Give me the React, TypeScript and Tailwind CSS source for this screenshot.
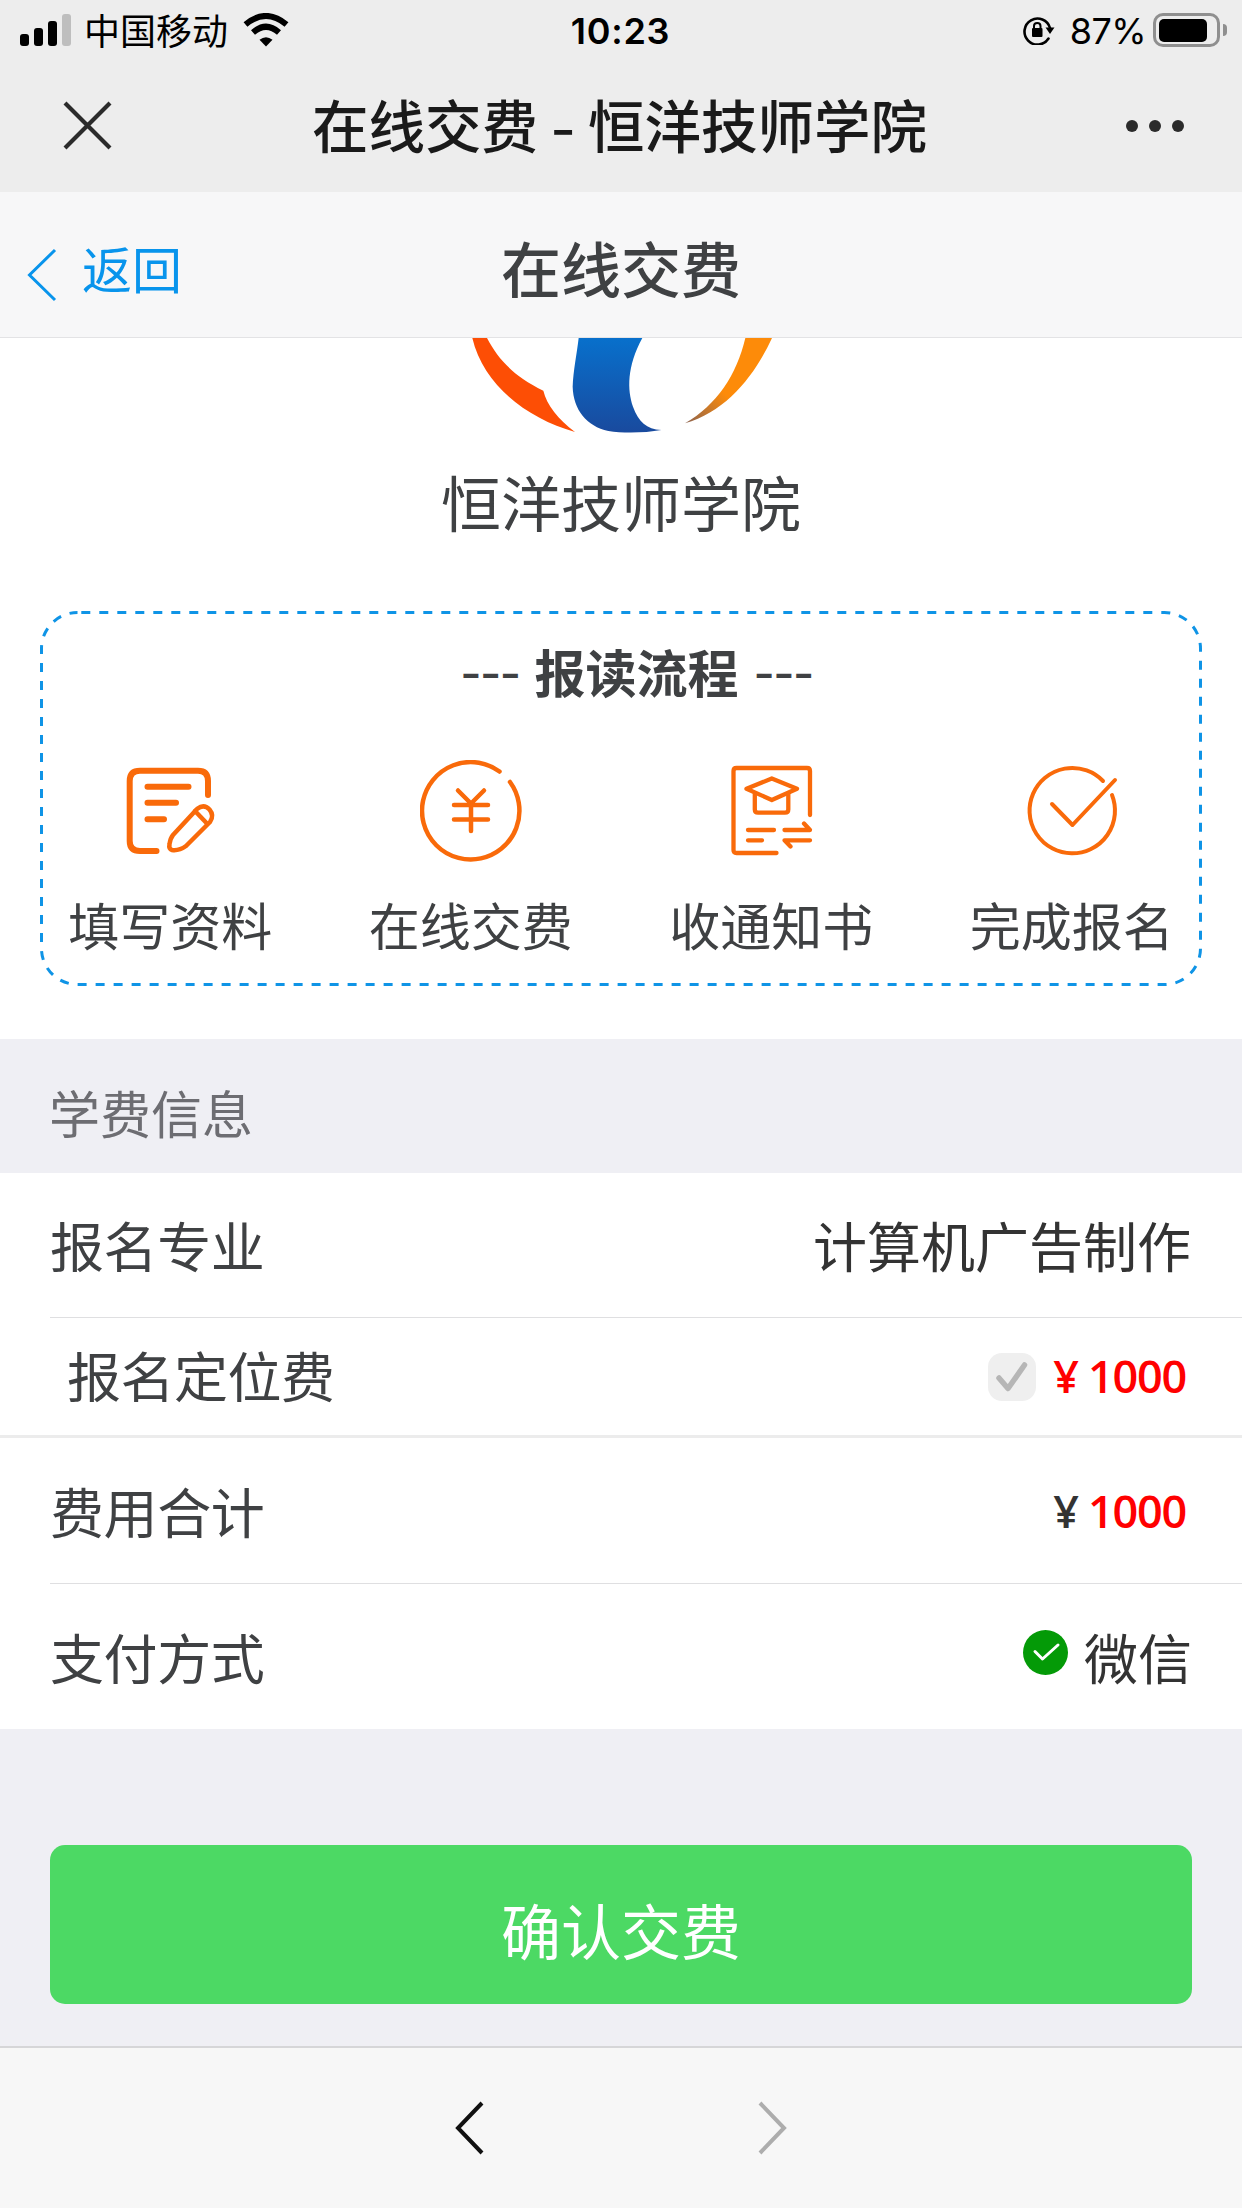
import type { ReactNode } from 'react'

interface Step {
  label: string
  icon: ReactNode
}

const FormIcon = () => (
  <svg width="102" height="102" viewBox="0 0 102 102" fill="none" stroke="#f96a0a" strokeLinecap="round" strokeLinejoin="round">
    <path d="M89 35V21Q89 10.700 79 10.700H21Q10.700 10.700 10.700 21V81Q10.700 91 21 91H37.500" strokeWidth="6" />
    <path d="M28.500 26.700H69.500M28.500 42.700H57M28.500 59.300H45" strokeWidth="6" />
    <path d="M78.300 48.700Q85 43.500 90.500 49.500Q95.500 55.500 91 62L67 86Q60 91 53 90Q49.500 89 50.500 84Q51.500 78 54 75Z" strokeWidth="4.500" />
    <path d="M76 51L87.500 63" strokeWidth="4.500" />
  </svg>
)

const YuanIcon = () => (
  <svg width="102" height="102" viewBox="0 0 102 102" fill="none" stroke="#f96a0a" strokeWidth="4.500" strokeLinecap="round" strokeLinejoin="round">
    <path d="M79.500 11.500A48.700 48.700 0 1 0 90 22" />
    <path d="M38 30.500L51 43.500L64 30.500M51 43.500V71M34 45H68M34 59.500H68" />
  </svg>
)

const NoticeIcon = () => (
  <svg width="102" height="102" viewBox="0 0 102 102" fill="none" stroke="#f96a0a" strokeWidth="4.300" strokeLinecap="round" strokeLinejoin="round">
    <path d="M90 55V11Q90 8 87 8H16.500Q13.500 8 13.500 11V90Q13.500 93 16.500 93H56.500" />
    <path d="M26.500 28.700L51.800 18.500L77 28.700L51.800 40Z" />
    <path d="M34.800 34V49.500Q34.800 52.700 38 52.700H65Q68.300 52.700 68.300 49.500V34" />
    <path d="M28 70H54M28 80.300H42M64.500 70H90L84 63.500M90 80.300H64.500L70.500 86.500" />
  </svg>
)

const DoneIcon = () => (
  <svg width="102" height="102" viewBox="0 0 102 102" fill="none" stroke="#f96a0a" strokeWidth="4" strokeLinecap="round" strokeLinejoin="round">
    <path d="M82 21A42.700 42.700 0 1 0 91 35" />
    <path d="M31 44L51.500 65L94 20" />
  </svg>
)

const steps: Step[] = [
  { label: '填写资料', icon: <FormIcon /> },
  { label: '在线交费', icon: <YuanIcon /> },
  { label: '收通知书', icon: <NoticeIcon /> },
  { label: '完成报名', icon: <DoneIcon /> },
]

function StatusBar() {
  return (
    <div className="grid h-15 grid-cols-3 items-center pr-[15px] pl-5 text-[36px] leading-none text-black">
      <div className="flex items-center">
        <div className="flex items-end gap-[5px]">
          <span className="h-3 w-[9px] rounded-[3px] bg-black" />
          <span className="h-[18px] w-[9px] rounded-[3px] bg-black" />
          <span className="h-[25px] w-[9px] rounded-[3px] bg-black" />
          <span className="h-8 w-[9px] rounded-[3px] bg-[#bebebe]" />
        </div>
        <span className="ml-[13px] pb-[2px]">中国移动</span>
        <svg className="ml-[15px]" width="46" height="34" viewBox="0 0 46 34">
          <path d="M23 33.500L16.500 26.800Q23 21.500 29.500 26.800Z" fill="#000" />
          <path d="M10 19.500Q23 8 36 19.500" fill="none" stroke="#000" strokeWidth="6" />
          <path d="M2.500 11.500Q23 -5.500 43.500 11.500" fill="none" stroke="#000" strokeWidth="6" />
        </svg>
      </div>
      <div className="pt-[2px] pr-[6px] text-center font-[Inter] font-semibold tracking-[0.7px]">10:23</div>
      <div className="flex items-center justify-end">
        <svg width="32" height="30" viewBox="0 0 32 30" fill="none" stroke="#000">
          <path d="M25.500 23.500A13 13 0 1 1 27 13" strokeWidth="2.600" strokeLinecap="round" />
          <path d="M22.500 12.500H31.500L27 19Z" fill="#000" stroke="none" />
          <rect x="9" y="13" width="10.500" height="9" rx="1" fill="#000" stroke="none" />
          <path d="M11 13V11Q11 8 14.200 8Q17.500 8 17.500 11V13" strokeWidth="2" />
        </svg>
        <span className="ml-[15px] pt-[2px] font-[Inter] tracking-[-0.6px]">87%</span>
        <div className="ml-[7px] flex h-[34px] w-[67px] items-center rounded-[10px] border-[3px] border-[#8f8f8f] pl-[3px]">
          <div className="h-[23px] w-[48px] rounded-[5px] bg-black" />
        </div>
        <div className="ml-[3px] h-3 w-[4px] rounded-r-full bg-[#8f8f8f]" />
      </div>
    </div>
  )
}

function BrowserBar() {
  return (
    <div className="flex h-33 items-center justify-between pr-[58px] pl-[62px] text-[#1a1a1a]">
      <svg className="mb-[2px]" width="51" height="51" viewBox="0 0 51 51" stroke="#2b2b2b" strokeWidth="4.200">
        <path d="M3 3L48 48M48 3L3 48" />
      </svg>
      <h1 className="flex pb-[6px] text-[56.500px] leading-none font-medium">
        在线交费
        <span className="mx-[15px] scale-x-120">-</span>
        恒洋技师学院
      </h1>
      <div className="flex gap-[11px]">
        <span className="size-3 rounded-full bg-[#2b2b2b]" />
        <span className="size-3 rounded-full bg-[#2b2b2b]" />
        <span className="size-3 rounded-full bg-[#2b2b2b]" />
      </div>
    </div>
  )
}

function PageHeader() {
  return (
    <header className="grid h-[146px] grid-cols-3 items-center border-b border-[#e3e3e5] bg-[#f7f7f8]">
      <a className="flex items-center pl-[27px] text-[50px] leading-none text-[#0894ec]">
        <svg className="mt-[21px]" width="30" height="54" viewBox="0 0 30 54" fill="none" stroke="#0894ec" strokeWidth="3">
          <path d="M28 2L2.500 27L28 52" />
        </svg>
        <span className="ml-[25px] pt-[5px]">返回</span>
      </a>
      <h2 className="pt-[4px] text-center text-[60px] leading-none font-medium">在线交费</h2>
    </header>
  )
}

function SchoolLogo() {
  return (
    <svg className="mx-auto block" width="442" height="98" viewBox="0 24 1326 294">
      <defs>
        <linearGradient id="blue" x1="0" y1="0" x2="0" y2="1">
          <stop offset="0" stopColor="#0870cc" />
          <stop offset="1" stopColor="#194a9e" />
        </linearGradient>
        <linearGradient id="orange" x1="1" y1="0" x2="0" y2="1">
          <stop offset="0.600" stopColor="#fd8b09" />
          <stop offset="1" stopColor="#8c6350" />
        </linearGradient>
      </defs>
      <path d="M217 24H261C295 88 340 138 430 182C440 225 475 268 525 306C380 265 250 165 217 24Z" fill="#fd4e05" />
      <path d="M536 24H727C680 110 682 180 699 230C715 275 740 297 784 300C735 309 670 310 625 303C560 288 520 240 518 170C520 120 530 75 536 24Z" fill="url(#blue)" />
      <path d="M1036 24H1116C1065 135 980 245 855 280C950 225 1010 135 1036 24Z" fill="url(#orange)" />
    </svg>
  )
}

function ProcessCard() {
  return (
    <div className="relative mx-10 h-[375px]">
      <svg className="absolute inset-0" width="1162" height="375" fill="none">
        <rect x="1.500" y="1.500" width="1159" height="372" rx="36" stroke="#0f94e6" strokeWidth="3" strokeDasharray="9 9" strokeDashoffset="-3.800" />
      </svg>
      <h3 className="flex items-center justify-center gap-[15px] pt-[30px] pl-[31px] text-[51px] leading-[56px] font-bold">
        <span className="pt-[4px] font-[Inter] text-[46px] font-medium tracking-[-1.500px]">---</span>
        报读流程
        <span className="pt-[4px] font-[Inter] text-[46px] font-medium tracking-[-1.500px]">---</span>
      </h3>
      <div className="-mx-5 mt-[59px] grid grid-cols-4">
        {steps.map((step) => (
          <div key={step.label} className="flex flex-col items-center">
            {step.icon}
            <span className="mt-[34px] text-[51px] leading-[56px]">{step.label}</span>
          </div>
        ))}
      </div>
    </div>
  )
}

function FeeList() {
  return (
    <div className="bg-white text-[54px] leading-none">
      <div className="ml-[50px] flex h-[145px] items-center justify-between border-b border-[#dfdfe1] pr-[51px]">
        <span className="tracking-[-0.400px]">报名专业</span>
        <span className="text-[#333]">计算机广告制作</span>
      </div>
      <div className="flex h-[120px] items-center justify-between border-b-[3px] border-[#ececec] pr-[56px] pl-[67px]">
        <span className="pb-[4px] tracking-[-0.500px]">报名定位费</span>
        <div className="flex items-center font-['Open_Sans'] text-[45px] font-semibold text-[#f00]">
          <svg className="mr-[17px]" width="48" height="48" viewBox="0 0 48 48">
            <rect width="48" height="48" rx="14" fill="#efefef" />
            <path d="M11 25L20 35.500L36.500 12" fill="none" stroke="#b6b6b6" strokeWidth="5.500" strokeLinecap="round" strokeLinejoin="round" />
          </svg>
          <span className="pb-[2px]">¥</span>
          <span className="ml-[9px] pb-[2px] tracking-[-1.200px]">1000</span>
        </div>
      </div>
      <div className="ml-[50px] flex h-[146px] items-center justify-between border-b border-[#dfdfe1] pr-[56px]">
        <span className="tracking-[-0.400px]">费用合计</span>
        <div className="flex font-['Open_Sans'] text-[45px] font-semibold text-[#333]">
          <span>¥</span>
          <span className="ml-[9px] tracking-[-1.200px] text-[#f00]">1000</span>
        </div>
      </div>
      <div className="ml-[50px] flex h-[145px] items-center justify-between pr-[50px]">
        <span className="pt-[1px] tracking-[-0.400px]">支付方式</span>
        <div className="flex items-center text-[#333]">
          <svg className="mr-[16px] mb-[8px]" width="45" height="45" viewBox="0 0 45 45">
            <circle cx="22.500" cy="22.500" r="22.500" fill="#049a07" />
            <path d="M12 21.500L19.500 29L35 15" fill="none" stroke="#fff" strokeWidth="3" strokeLinecap="round" strokeLinejoin="round" />
          </svg>
          <span className="pt-[1px]">微信</span>
        </div>
      </div>
    </div>
  )
}

export default function App() {
  return (
    <div className="flex h-[2208px] w-[1242px] flex-col overflow-hidden bg-[#efeff4] font-['Noto_Sans_CJK_SC',sans-serif] text-[#3f4143]">
      <div className="bg-[#ededed]">
        <StatusBar />
        <BrowserBar />
      </div>
      <PageHeader />
      <section className="h-[701px] bg-white">
        <SchoolLogo />
        <p className="mt-[35px] mb-[80px] text-center text-[60px] leading-none">恒洋技师学院</p>
        <ProcessCard />
      </section>
      <div className="flex h-[134px] items-center pt-[12px] pl-[49px] text-[51px] leading-none text-[#6d6d72]">学费信息</div>
      <FeeList />
      <div className="flex-1 px-[50px] pt-[116px]">
        <button className="h-[159px] w-full rounded-[15px] bg-[#4cd964] pt-[9px] text-[60px] leading-none text-white">确认交费</button>
      </div>
      <nav className="flex h-[162px] items-center justify-center gap-[274px] border-t-2 border-[#d6d6d8] bg-[#f7f7f7]">
        <svg width="30" height="54" viewBox="0 0 30 54" fill="none" stroke="#111" strokeWidth="4">
          <path d="M28 2L4 27L28 52" />
        </svg>
        <svg width="30" height="54" viewBox="0 0 30 54" fill="none" stroke="#adadad" strokeWidth="4">
          <path d="M2 2L26 27L2 52" />
        </svg>
      </nav>
    </div>
  )
}
